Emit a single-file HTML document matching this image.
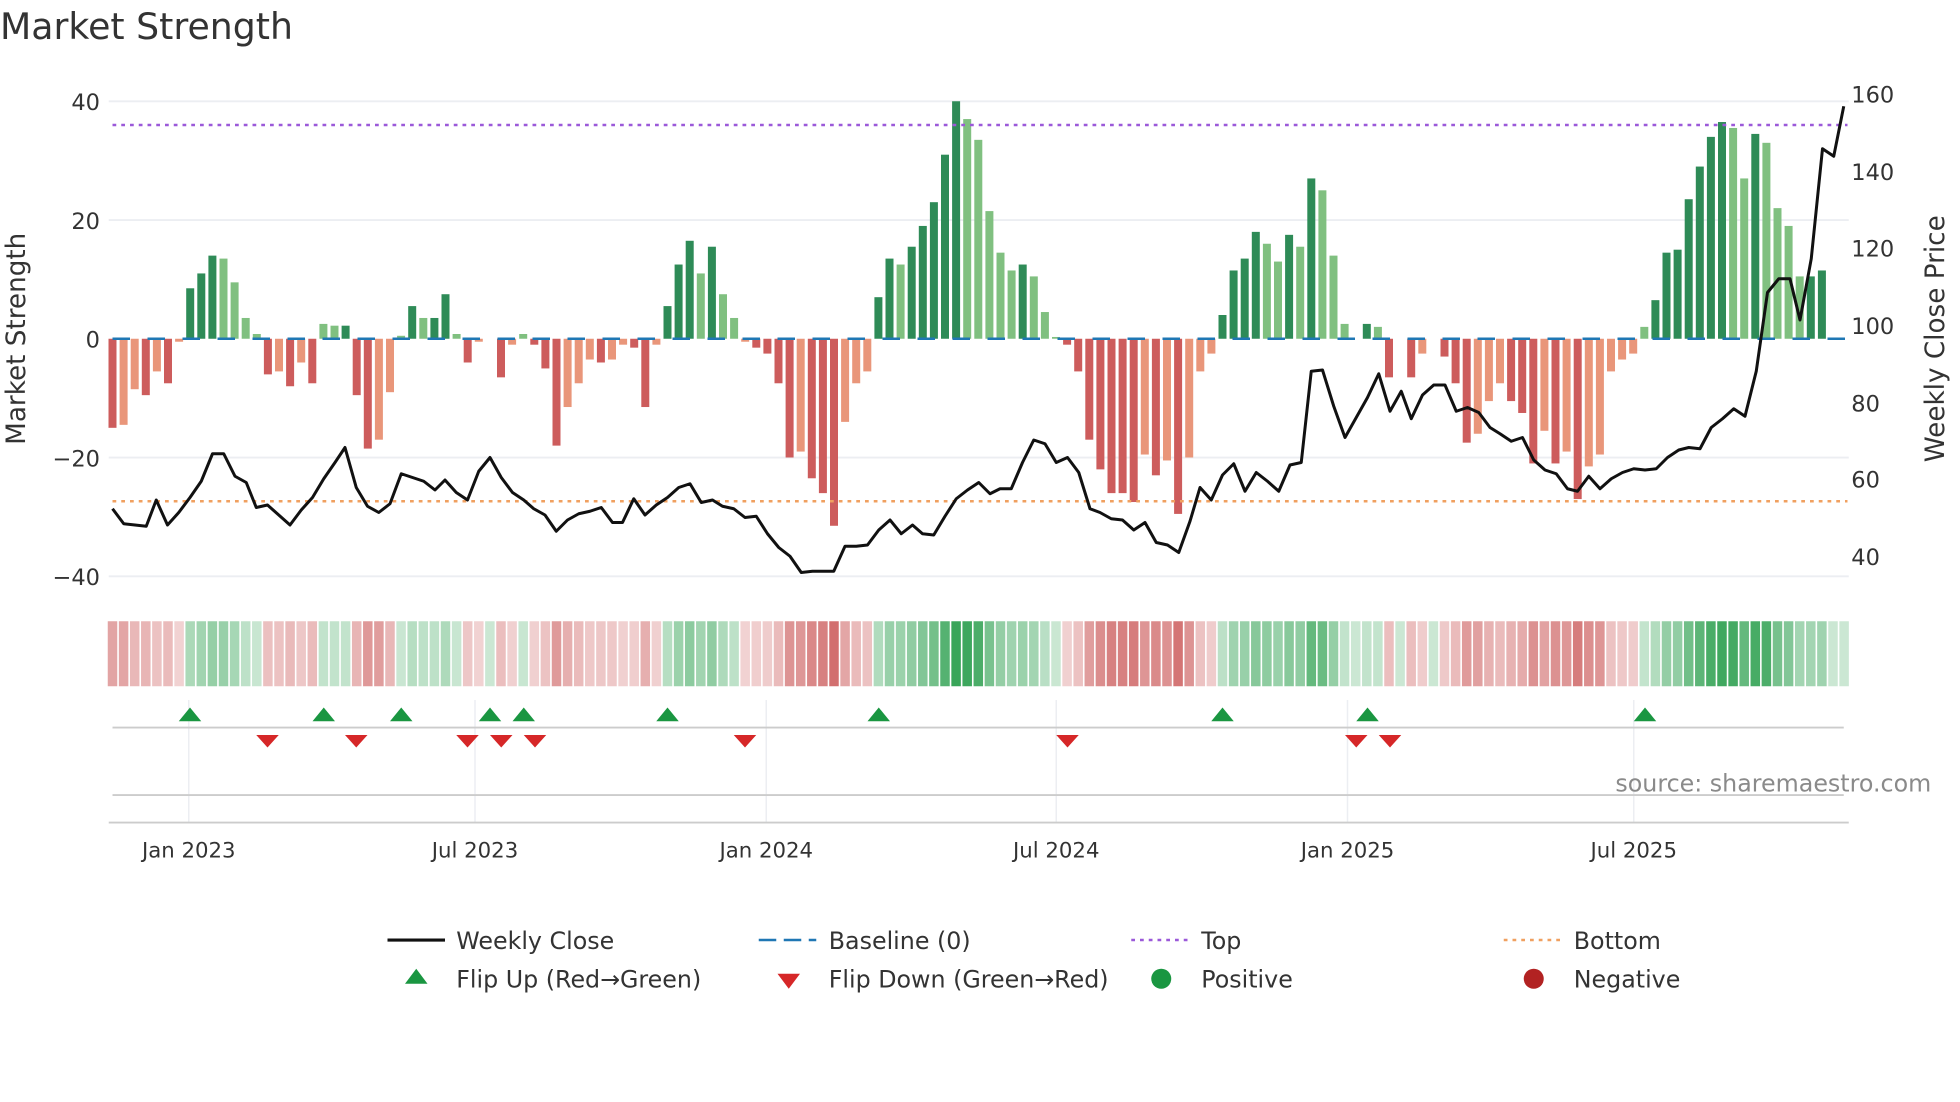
<!DOCTYPE html>
<html><head><meta charset="utf-8"><style>
html,body{margin:0;padding:0;background:#fff;}
svg{display:block;font-family:"DejaVu Sans","Liberation Sans",sans-serif;}
</style></head><body>
<svg id="s" width="1960" height="1102" viewBox="0 0 1568 881.6" xmlns="http://www.w3.org/2000/svg">
<rect width="1568" height="882" fill="#fff"/>
<text x="0" y="31" font-size="29" fill="#333">Market Strength</text>
<g id="grid" stroke="#eceef2" stroke-width="1.5">
<line x1="87" x2="1479" y1="81" y2="81"/><line x1="87" x2="1479" y1="176" y2="176"/>
<line x1="87" x2="1479" y1="366" y2="366"/><line x1="87" x2="1479" y1="461" y2="461"/>
</g>
<g font-size="18" fill="#333">
<text x="80" y="88" text-anchor="end">40</text><text x="80" y="183" text-anchor="end">20</text>
<text x="80" y="278" text-anchor="end">0</text><text x="80" y="373" text-anchor="end">−20</text>
<text x="80" y="468" text-anchor="end">−40</text>
<text x="1481" y="82">160</text><text x="1481" y="144">140</text><text x="1481" y="205">120</text>
<text x="1481" y="267">100</text><text x="1481" y="329">80</text><text x="1481" y="390">60</text>
<text x="1481" y="452">40</text>
<text transform="translate(20,271) rotate(-90)" text-anchor="middle" font-size="21">Market Strength</text>
<text transform="translate(1555,271) rotate(-90)" text-anchor="middle" font-size="21">Weekly Close Price</text>
</g>
<g id="vg" stroke="#eceef2" stroke-width="1.2"></g>
<g id="bars"></g>
<line x1="90" x2="1478" y1="271" y2="271" stroke="#1f77b4" stroke-width="2" stroke-dasharray="14,14"/>
<line x1="90" x2="1478" y1="100" y2="100" stroke="#9b59d9" stroke-width="2" stroke-dasharray="3,4"/>
<line x1="90" x2="1478" y1="401" y2="401" stroke="#f0a060" stroke-width="2" stroke-dasharray="3,4"/>
<polyline id="price" fill="none" stroke="#111" stroke-width="2.4" stroke-linejoin="round"/>
<g id="heat"></g>
<line x1="90" x2="1475" y1="582" y2="582" stroke="#ccc" stroke-width="1.5"/>
<line x1="90" x2="1475" y1="636" y2="636" stroke="#ccc" stroke-width="1.5"/>
<line x1="87" x2="1479" y1="658" y2="658" stroke="#ccc" stroke-width="1.5"/>
<g id="mk"></g>
<text x="1545" y="633" text-anchor="end" font-size="19" fill="#8a8a8a">source: sharemaestro.com</text>
<g font-size="17" fill="#333" text-anchor="middle">
<text x="151" y="686">Jan 2023</text><text x="380" y="686">Jul 2023</text><text x="613" y="686">Jan 2024</text>
<text x="845" y="686">Jul 2024</text><text x="1078" y="686">Jan 2025</text><text x="1307" y="686">Jul 2025</text>
</g>
<g font-size="19" fill="#333">
<line x1="310" x2="356" y1="752" y2="752" stroke="#111" stroke-width="2.5"/><text x="365" y="759">Weekly Close</text>
<line x1="607" x2="653" y1="752" y2="752" stroke="#1f77b4" stroke-width="2" stroke-dasharray="14,6"/><text x="663" y="759">Baseline (0)</text>
<line x1="905" x2="951" y1="752" y2="752" stroke="#9b59d9" stroke-width="2" stroke-dasharray="3,4"/><text x="961" y="759">Top</text>
<line x1="1203" x2="1249" y1="752" y2="752" stroke="#f0a060" stroke-width="2" stroke-dasharray="3,4"/><text x="1259" y="759">Bottom</text>
<polygon points="324,787 342,787 333,775" fill="#1a9641"/><text x="365" y="790">Flip Up (Red→Green)</text>
<polygon points="622,779 640,779 631,791" fill="#d62728"/><text x="663" y="790">Flip Down (Green→Red)</text>
<circle cx="929" cy="783" r="8" fill="#1a9641"/><text x="961" y="790">Positive</text>
<circle cx="1227" cy="783" r="8" fill="#b22222"/><text x="1259" y="790">Negative</text>
</g>
</svg>
<script>
var NS="http://www.w3.org/2000/svg";
function el(p,t,a){var e=document.createElementNS(NS,t);for(var k in a)e.setAttribute(k,a[k]);p.appendChild(e);return e;}
var vals=[-15,-14.5,-8.5,-9.5,-5.5,-7.5,-0.5,8.5,11,14,13.5,9.5,3.5,0.8,-6,-5.5,-8,-4,-7.5,2.5,2.2,2.2,-9.5,-18.5,-17,-9,0.5,5.5,3.5,3.5,7.5,0.8,-4,-0.5,0,-6.5,-1,0.8,-1,-5,-18,-11.5,-7.5,-3.5,-4,-3.5,-1,-1.5,-11.5,-1,5.5,12.5,16.5,11,15.5,7.5,3.5,-0.5,-1.5,-2.5,-7.5,-20,-19,-23.5,-26,-31.5,-14,-7.5,-5.5,7,13.5,12.5,15.5,19,23,31,40,37,33.5,21.5,14.5,11.5,12.5,10.5,4.5,0.3,-1,-5.5,-17,-22,-26,-26,-27.5,-19.5,-23,-20.5,-29.5,-20,-5.5,-2.5,4,11.5,13.5,18,16,13,17.5,15.5,27,25,14,2.5,0,2.5,2,-6.5,0,-6.5,-2.5,0,-3,-7.5,-17.5,-16,-10.5,-7.5,-10.5,-12.5,-21,-15.5,-21,-19,-27,-21.5,-19.5,-5.5,-3.5,-2.5,2,6.5,14.5,15,23.5,29,34,36.5,35.5,27,34.5,33,22,19,10.5,10.5,11.5,0,0];
var bars=document.getElementById('bars'),heat=document.getElementById('heat');
for(var i=0;i<vals.length;i++){var v=vals[i],x=90+8.88*i,prev=i?vals[i-1]:v;
 var rising=Math.abs(v)>=Math.abs(prev);
 var c=v>=0?(rising?'#2e8b57':'#80c080'):(rising?'#cd5c5c':'#e9967a');
 var h=Math.abs(v)*4.75;
 if(h>0.3)el(bars,'rect',{x:x-3.2,y:v>=0?271-h:271,width:6.4,height:h,fill:c});
 var a=Math.min(0.95,0.25+Math.abs(v)/55);
 var hc=v>=0?'rgba(46,160,80,'+a+')':'rgba(200,80,80,'+a+')';
 el(heat,'rect',{x:x-3.8,y:497,width:7.6,height:52,fill:hc});
}
var vg=document.getElementById('vg');[151,380,613,845,1078,1307].forEach(function(x){el(vg,'line',{x1:x,x2:x,y1:560,y2:658});});
var P="90,407 99,419 108,420 117,421 125,400 134,420 143,410 152,398 161,385 170,363 179,363 188,381 197,386 205,406 214,404 223,412 232,420 241,408 250,398 259,383 268,370 276,358 285,390 294,405 303,410 312,403 321,379 330,382 339,385 348,392 356,384 365,394 374,400 383,377 392,366 401,382 410,394 419,400 427,407 436,412 445,425 454,416 463,411 472,409 481,406 490,418 498,418 507,399 516,412 525,404 534,398 543,390 552,387 561,402 570,400 578,405 587,407 596,414 605,413 614,427 623,438 632,445 641,458 650,457 658,457 667,457 676,437 685,437 694,436 703,424 712,416 721,427 730,420 738,427 747,428 756,413 765,399 774,392 783,386 792,395 800,391 809,391 818,370 827,352 836,355 845,370 854,366 863,378 872,407 880,410 889,415 898,416 907,424 916,418 925,434 934,436 943,442 952,417 960,390 969,400 978,380 987,371 996,393 1005,378 1014,385 1023,393 1032,372 1041,370 1049,297 1058,296 1067,325 1076,350 1085,334 1094,318 1103,299 1112,329 1121,313 1129,335 1138,316 1147,308 1156,308 1165,329 1174,326 1183,330 1192,342 1200,347 1209,353 1218,350 1227,368 1236,376 1245,379 1254,391 1262,393 1271,381 1280,391 1289,383 1298,378 1307,375 1316,376 1325,375 1334,366 1343,360 1351,358 1360,359 1369,342 1378,335 1387,327 1396,333 1405,297 1414,234 1423,223 1432,223 1440,256 1449,207 1458,119 1467,125 1475,85";
document.getElementById('price').setAttribute('points',P);
var mk=document.getElementById('mk');
[152,259,321,392,419,534,703,978,1094,1316].forEach(function(x){el(mk,'polygon',{points:(x-9)+',577 '+(x+9)+',577 '+x+',566',fill:'#1a9641'});});
[214,285,374,401,428,596,854,1085,1112].forEach(function(x){el(mk,'polygon',{points:(x-9)+',588 '+(x+9)+',588 '+x+',598',fill:'#d62728'});});
</script>
</body></html>
